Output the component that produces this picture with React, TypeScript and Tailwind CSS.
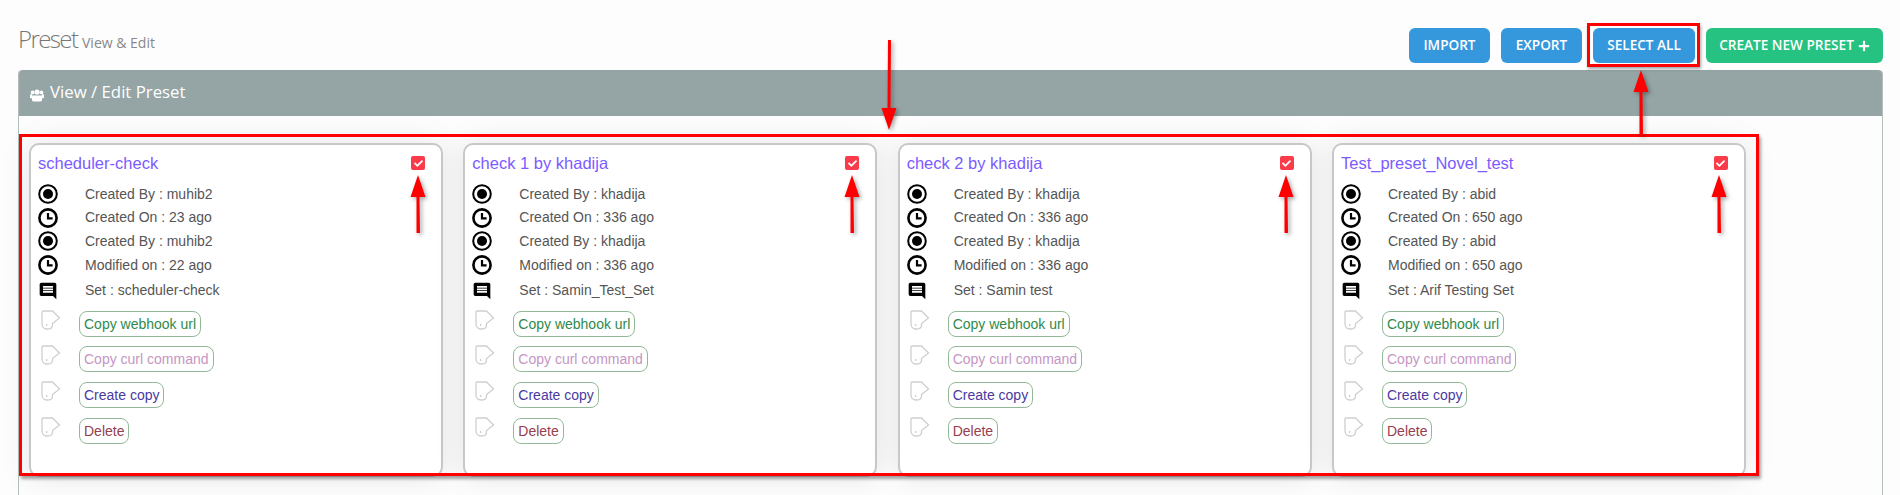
import React from 'react';
import { FaCheck, FaPlus } from 'react-icons/fa';

const presets = [
  { title: 'scheduler-check', by: 'muhib2', on: '23', mod: '22', set: 'scheduler-check' },
  { title: 'check 1 by khadija', by: 'khadija', on: '336', mod: '336', set: 'Samin_Test_Set' },
  { title: 'check 2 by khadija', by: 'khadija', on: '336', mod: '336', set: 'Samin test' },
  { title: 'Test_preset_Novel_test', by: 'abid', on: '650', mod: '650', set: 'Arif Testing Set' },
];

const RadioIcon = () => (
  <svg width="20" height="20" viewBox="0 0 20 20" className="shrink-0">
    <circle cx="10" cy="10" r="8.8" fill="none" stroke="#000" strokeWidth="2" />
    <circle cx="10" cy="10" r="5" fill="#000" />
  </svg>
);

const ClockIcon = () => (
  <svg width="20" height="20" viewBox="0 0 20 20" className="shrink-0">
    <circle cx="10" cy="10" r="8.6" fill="none" stroke="#000" strokeWidth="2.6" />
    <path d="M10 5v5.4h4.6" fill="none" stroke="#000" strokeWidth="2.2" />
  </svg>
);

const MessageIcon = () => (
  <svg width="20" height="20" viewBox="0 0 24 24" className="shrink-0">
    <path
      transform="translate(24 0) scale(-1 1)"
      fill="#000"
      d="M20 2H4c-1.1 0-1.99.9-1.99 2L2 22l4-4h14c1.1 0 2-.9 2-2V4c0-1.1-.9-2-2-2zm-2 12H6v-2h12v2zm0-3H6V9h12v2zm0-3H6V6h12v2z"
    />
  </svg>
);

const TagIcon = () => (
  <svg width="20" height="20" viewBox="0 0 20 20" className="shrink-0">
    <path
      d="M2 1H11.500L18.500 8L11.500 13.500V15C11.500 17.500 9.500 19 7 19H6C3 19 1 17 1 14V2C1 1.400 1.400 1 2 1Z"
      fill="none"
      stroke="#cfcfcf"
      strokeWidth="1.3"
    />
    <circle cx="5.700" cy="15" r=".7" fill="#aaa" />
  </svg>
);

const UsersIcon = () => (
  <svg width="14" height="14" viewBox="0 0 14 14" className="shrink-0 mt-[5px]" fill="#fff">
    <circle cx="7" cy="4" r="2.600" />
    <circle cx="2.600" cy="4.400" r="1.900" />
    <circle cx="11.400" cy="4.400" r="1.900" />
    <path d="M3 7.500h8c.8 0 1 .6 1 1.200V12c0 .8-.6 1.400-1.400 1.400H3.400C2.600 13.400 2 12.800 2 12V8.700c0-.6.2-1.200 1-1.200z" />
    <path d="M0 7.200c0-.6.4-.9 1-.9h1.200v3.900H.8c-.5 0-.8-.3-.8-.8zM14 7.200c0-.6-.4-.9-1-.9h-1.200v3.900h1.400c.5 0 .8-.3.8-.8z" />
  </svg>
);

const InfoRow = ({ icon, text, className }: { icon: React.ReactNode; text: string; className: string }) => (
  <div className={`flex items-center ${className}`}>
    <div className="w-[47px] shrink-0">{icon}</div>
    <span>{text}</span>
  </div>
);

const ActionRow = ({ label, color, height }: { label: string; color: string; height: string }) => (
  <div className={`flex items-start ${height}`}>
    <div className="w-[41px] shrink-0 pl-[3px] -mt-[1px]">
      <TagIcon />
    </div>
    <button className={`border border-[#93b998] rounded-[8px] bg-white px-1 h-[26px] text-[14px] ${color}`}>
      {label}
    </button>
  </div>
);

const PresetCard = ({ p }: { p: (typeof presets)[number] }) => (
  <div className="w-[414px] h-[334px] shrink-0 bg-white border-2 border-[#c8c8c8] rounded-[10px] shadow-[0_0_30px_rgba(0,0,0,0.1)] pl-[7px] pr-[16px] pt-[7px] text-[#555] text-[14px] font-['Liberation_Sans',sans-serif]">
    <div className="flex items-center justify-between h-[22px] mb-[8px]">
      <span className="text-[16.5px] text-[#7b5bff]">{p.title}</span>
      <span className="w-[14px] h-[14px] bg-[#fb3a4a] rounded-[2px] flex items-center justify-center">
        <FaCheck className="text-white text-[9px]" />
      </span>
    </div>
    <InfoRow icon={<RadioIcon />} text={`Created By : ${p.by}`} className="h-[24px]" />
    <InfoRow icon={<ClockIcon />} text={`Created On : ${p.on} ago`} className="h-[23px]" />
    <InfoRow icon={<RadioIcon />} text={`Created By : ${p.by}`} className="h-[24px]" />
    <InfoRow icon={<ClockIcon />} text={`Modified on : ${p.mod} ago`} className="h-[24px]" />
    <InfoRow icon={<MessageIcon />} text={`Set : ${p.set}`} className="h-[27px]" />
    <div className="mt-[7px]">
      <ActionRow label="Copy webhook url" color="text-[#2f8a4c]" height="h-[35px]" />
      <ActionRow label="Copy curl command" color="text-[#c596c4]" height="h-[36px]" />
      <ActionRow label="Create copy" color="text-[#4a3aa0]" height="h-[36px]" />
      <ActionRow label="Delete" color="text-[#96404f]" height="h-[36px]" />
    </div>
  </div>
);

const UpArrow = ({ x, top, height }: { x: number; top: number; height: number }) => (
  <svg
    className="absolute pointer-events-none drop-shadow-[2px_2px_2px_rgba(0,0,0,0.35)]"
    style={{ left: x - 10, top }}
    width="20"
    height={height}
    viewBox={`0 0 20 ${height}`}
  >
    <path d={`M10 0L17.500 22H11.500L12 ${height}H8.500L8.500 22H2.500Z`} fill="#ff0000" />
  </svg>
);

const App: React.FC = () => {
  return (
    <div className="relative w-[1900px] h-[495px] overflow-hidden bg-[#fdfdfd] font-['Open_Sans',sans-serif]">
      {/* Page Header */}
      <div className="flex items-start justify-between pl-[18px] pr-[17px] pt-[28px] h-[70px]">
        <h1 className="text-[24px] font-light leading-[24px] tracking-[-1.6px] text-[#777] -mt-[1px]">
          Preset <small className="text-[14px] font-normal tracking-normal text-[#888]">View &amp; Edit</small>
        </h1>
        <div className="flex gap-[11px] text-[13.6px] font-semibold text-white">
          <button className="w-[81px] h-[35px] rounded-[6px] bg-[#3598dc]">IMPORT</button>
          <button className="w-[81px] h-[35px] rounded-[6px] bg-[#3598dc]">EXPORT</button>
          <button className="w-[102px] h-[35px] rounded-[6px] bg-[#3598dc]">SELECT ALL</button>
          <button className="w-[177px] h-[35px] rounded-[6px] bg-[#26c281] flex items-center justify-center gap-[4px]">
            CREATE NEW PRESET <FaPlus className="text-[12px]" />
          </button>
        </div>
      </div>

      {/* Panel */}
      <div className="mr-[17px] ml-[18px] h-[425px] border-x border-[#b5bebd] rounded-t-[4px]">
        <div className="h-[46px] bg-[#95a5a6] rounded-t-[4px] flex items-center pl-[11px] pb-[2px] text-[16.8px] text-white gap-[6px]">
          <UsersIcon />
          View / Edit Preset
        </div>
        <div className="flex gap-[20.33px] pl-[10px] pt-[27px]">
          {presets.map((p) => (
            <PresetCard key={p.title} p={p} />
          ))}
        </div>
      </div>

      {/* Annotations */}
      <div className="absolute left-[19px] top-[134px] w-[1740px] h-[342px] border-[3px] border-[#ff0000] shadow-[2px_3px_3px_rgba(0,0,0,0.35)] pointer-events-none" />
      <div className="absolute left-[1587px] top-[23px] w-[113px] h-[44px] border-[3px] border-[#ff0000] shadow-[1px_2px_3px_rgba(0,0,0,0.35)] pointer-events-none" />
      <UpArrow x={1641} top={70} height={65} />
      <UpArrow x={418} top={175} height={58} />
      <UpArrow x={852} top={175} height={58} />
      <UpArrow x={1286} top={175} height={58} />
      <UpArrow x={1719} top={175} height={58} />
      <svg
        className="absolute pointer-events-none drop-shadow-[2px_2px_2px_rgba(0,0,0,0.35)]"
        style={{ left: 879, top: 40 }}
        width="20"
        height="92"
        viewBox="0 0 20 92"
      >
        <path d="M10 90L2.500 68H8.500L9 0H12L11.500 68H17.500Z" fill="#ff0000" />
      </svg>
    </div>
  );
};

export default App;
